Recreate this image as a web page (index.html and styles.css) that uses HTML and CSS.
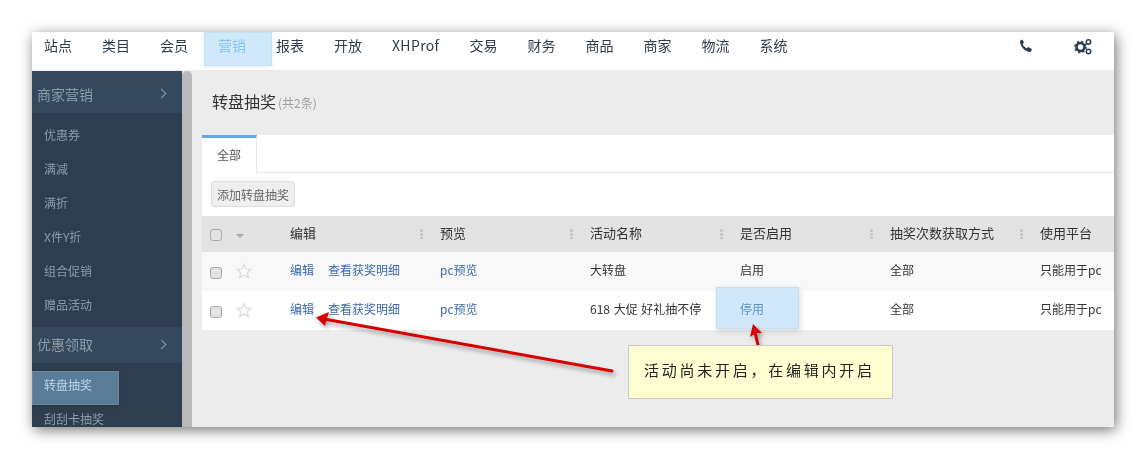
FILE: index.html
```html
<!DOCTYPE html>
<html lang="zh">
<head>
<meta charset="utf-8">
<title>转盘抽奖</title>
<link rel="stylesheet" href="styles.css">
</head>
<body>
<div class="page">
  <div class="frame">
    <nav class="nav">
      <a class="nav-item">站点</a>
      <a class="nav-item">类目</a>
      <a class="nav-item">会员</a>
      <a class="nav-item nav-active">营销<span class="nav-glow"></span></a>
      <a class="nav-item">报表</a>
      <a class="nav-item">开放</a>
      <a class="nav-item nav-latin">XHProf</a>
      <a class="nav-item">交易</a>
      <a class="nav-item">财务</a>
      <a class="nav-item">商品</a>
      <a class="nav-item">商家</a>
      <a class="nav-item">物流</a>
      <a class="nav-item">系统</a>
      <div class="nav-icons">
        <svg class="icon-phone" width="14" height="14" viewBox="0 0 14 14"><path d="M1.500 1.200 3.500.4 5 3.600 3.700 4.900c.7 2 2.100 3.500 4 4.300L9.100 8.100 12.900 10l-.7 2.200c-.5.800-1.200 1-2 .8C5.800 12 2.200 8.400 1.100 3.700 1 2.900 1.100 1.800 1.500 1.200z" fill="#2c3e50"/></svg>
        <svg class="icon-gears" width="18" height="16" viewBox="0 0 18 16">
          <circle cx="6.500" cy="8" r="4" fill="none" stroke="#2c3e50" stroke-width="2.600"/>
          <circle cx="6.500" cy="8" r="5.600" fill="none" stroke="#2c3e50" stroke-width="1.500" stroke-dasharray="2.200 2.200"/>
          <circle cx="14.500" cy="3" r="2.200" fill="none" stroke="#2c3e50" stroke-width="1.500"/>
          <circle cx="14.500" cy="12.500" r="2.200" fill="none" stroke="#2c3e50" stroke-width="1.500"/>
        </svg>
      </div>
    </nav>
    <div class="body">
      <aside class="side">
        <div class="side-group">商家营销<span class="chev"></span></div>
        <ul class="side-list">
          <li class="side-item">优惠券</li>
          <li class="side-item">满减</li>
          <li class="side-item">满折</li>
          <li class="side-item">X件Y折</li>
          <li class="side-item">组合促销</li>
          <li class="side-item">赠品活动</li>
        </ul>
        <div class="side-group side-group-b">优惠领取<span class="chev"></span></div>
        <ul class="side-list">
          <li class="side-item side-active">转盘抽奖</li>
          <li class="side-item">刮刮卡抽奖</li>
        </ul>
      </aside>
      <div class="scroll"><div class="scroll-thumb"></div></div>
      <main class="main">
        <h1 class="title">转盘抽奖<small class="count">(共2条)</small></h1>
        <div class="panel">
          <div class="tabs"><div class="tab">全部</div></div>
          <div class="toolbar"><button class="btn">添加转盘抽奖</button></div>
          <div class="row row-head">
            <div class="cell-check"><span class="check"></span></div>
            <div class="cell-star"><span class="caret"></span></div>
            <div class="cell">编辑<i class="grip"></i></div>
            <div class="cell">预览<i class="grip"></i></div>
            <div class="cell">活动名称<i class="grip"></i></div>
            <div class="cell">是否启用<i class="grip"></i></div>
            <div class="cell">抽奖次数获取方式<i class="grip"></i></div>
            <div class="cell">使用平台</div>
          </div>
          <div class="row row-odd">
            <div class="cell-check"><span class="check"></span></div>
            <div class="cell-star"><svg class="star" width="16" height="16" viewBox="0 0 16 16"><polygon points="8,1.200 10,6 15.200,6.300 11.200,9.700 12.500,14.800 8,12 3.500,14.800 4.800,9.700 .8,6.300 6,6"/></svg></div>
            <div class="cell"><a class="link">编辑</a><a class="link link-gap">查看获奖明细</a></div>
            <div class="cell"><a class="link">pc预览</a></div>
            <div class="cell">大转盘</div>
            <div class="cell">启用</div>
            <div class="cell">全部</div>
            <div class="cell">只能用于pc</div>
          </div>
          <div class="row row-even">
            <div class="cell-check"><span class="check"></span></div>
            <div class="cell-star"><svg class="star" width="16" height="16" viewBox="0 0 16 16"><polygon points="8,1.200 10,6 15.200,6.300 11.200,9.700 12.500,14.800 8,12 3.500,14.800 4.800,9.700 .8,6.300 6,6"/></svg></div>
            <div class="cell"><a class="link">编辑</a><a class="link link-gap">查看获奖明细</a></div>
            <div class="cell"><a class="link">pc预览</a></div>
            <div class="cell cell-name">618 大促 好礼抽不停</div>
            <div class="cell cell-off"><span class="off-glow"></span><span class="off-text">停用</span></div>
            <div class="cell">全部</div>
            <div class="cell">只能用于pc</div>
          </div>
        </div>
      </main>
    </div>
    <svg class="arrows" width="1082" height="395" viewBox="32 32 1082 395">
      <g class="arrow-set">
        <path d="M612 371 324 319" fill="none" stroke="#d60000" stroke-width="3" stroke-linecap="round"/>
        <polygon points="316,317.500 329,312 326.500,319.500 325,326" fill="#d60000"/>
        <path d="M758 345 755 332" fill="none" stroke="#d60000" stroke-width="3" stroke-linecap="round"/>
        <polygon points="753,324 762,333 756,333 750,337" fill="#d60000"/>
      </g>
    </svg>
    <div class="callout">活动尚未开启，在编辑内开启</div>
  </div>
</div>
</body>
</html>
```

FILE: styles.css
```css
* { box-sizing: border-box; }
html, body { margin: 0; padding: 0; background: #fff; }
body {
  width: 1146px;
  height: 459px;
  overflow: hidden;
  font-family: "Noto Sans CJK SC", "Liberation Sans", sans-serif;
  color: #333;
}
.page { padding: 32px; filter: drop-shadow(2px 3px 7px rgba(0,0,0,.55)); }
.frame {
  position: relative;
  width: 1082px;
  height: 395px;
  display: flex;
  flex-direction: column;
  overflow: hidden;
  background: #ececec;
}

.nav {
  height: 38px;
  flex: none;
  display: flex;
  gap: 30px;
  padding-left: 12px;
  background: #fff;
  font-size: 14px;
  line-height: 26px;
  color: #2f3b48;
}
.nav-item { position: relative; display: block; }
.nav-latin { letter-spacing: .35px; }
.nav-active { color: #6db6ec; }
.nav-glow {
  position: absolute;
  left: -14px;
  top: 0;
  width: 68px;
  height: 34px;
  background: rgba(160, 210, 245, .5);
  border: 1px solid rgba(170, 215, 245, .35);
  box-shadow: 0 2px 5px rgba(0,0,0,.07);
}
.nav-icons {
  margin-left: auto;
  display: flex;
  align-items: flex-start;
  gap: 41px;
  padding: 7px 22px 0 0;
}

.body { flex: 1; display: flex; min-height: 0; }
.side {
  width: 150px;
  flex: none;
  margin-top: 1px;
  background: #2c3e50;
  color: #8f9ba6;
  overflow: hidden;
}
.side-group {
  height: 42px;
  padding-left: 5px;
  background: #34495e;
  font-size: 14px;
  line-height: 46px;
  position: relative;
}
.side-group-b { height: 36px; line-height: 34px; }
.chev {
  position: absolute;
  right: 17px;
  top: 19px;
  width: 7px;
  height: 7px;
  border-top: 1.500px solid #8f9ba6;
  border-right: 1.500px solid #8f9ba6;
  transform: rotate(45deg);
}
.side-group-b .chev { top: 14px; }
.side-list { list-style: none; margin: 0; padding: 5px 0; }
.side-item {
  position: relative;
  height: 34px;
  padding-left: 12px;
  font-size: 12px;
  line-height: 34px;
}
.side-active { color: #fff; z-index: 0; }
.side-active::before {
  content: "";
  position: absolute;
  left: 0;
  top: 3px;
  width: 85px;
  height: 32px;
  background: rgba(130, 175, 210, .55);
  border: 1px solid #6f8599;
  box-shadow: 0 1px 3px rgba(0,0,0,.15);
}
.scroll { width: 10px; flex: none; background: #e6e6e6; margin-top: 1px; }
.scroll-thumb { height: 100%; background: #b9b9b9; border-radius: 5px 5px 0 0; }

.main { flex: 1; min-width: 0; padding-left: 10px; }
.title {
  margin: 0;
  height: 65px;
  padding: 19px 0 0 10px;
  font-size: 16px;
  font-weight: 400;
  line-height: 24px;
  color: #333;
}
.count { font-size: 12px; color: #a0a0a0; margin-left: 2px; }
.panel { background: #fff; }
.tabs { height: 38px; border-bottom: 1px solid #e8e8e8; }
.tab {
  width: 55px;
  height: 38px;
  border-top: 3px solid #5dade2;
  border-right: 1px solid #e8e8e8;
  background: #fff;
  padding-left: 15px;
  font-size: 12px;
  line-height: 34px;
  color: #555;
}
.toolbar { height: 43px; padding: 8px 0 0 9px; }
.btn {
  display: block;
  width: 84px;
  height: 26px;
  padding: 0;
  background: #eee;
  border: 1px solid #ddd;
  border-radius: 3px;
  font: inherit;
  font-size: 12px;
  color: #666;
}
.row {
  display: grid;
  grid-template-columns: 34px 39px repeat(5, 150px) 74px;
  height: 39px;
  align-items: center;
  font-size: 12px;
}
.row-head { height: 36px; background: #e3e3e3; font-size: 13px; }
.row-odd { background: #f8f8f8; }
.row-even { background: #fff; }
.cell-check { padding-left: 8px; display: flex; }
.cell-star { display: flex; }
.check {
  display: block;
  width: 12px;
  height: 12px;
  margin-top: 2px;
  background: #e2e2e2;
  border: 1px solid #aaa;
  border-radius: 3px;
}
.caret {
  width: 0;
  height: 0;
  border: 4px solid transparent;
  border-top-color: #aaa;
  border-bottom-width: 0;
  margin-top: 3px;
}
.star { display: block; margin-top: -2px; fill: #fafafa; stroke: #dcdcdc; stroke-width: 1.200; }
.cell { position: relative; padding-left: 15px; white-space: nowrap; height: 100%; display: flex; align-items: center; padding-bottom: 4px; }
.cell-name { word-spacing: 1px; }
.grip {
  position: absolute;
  right: 2px;
  top: 13px;
  width: 3px;
  height: 10px;
  background: repeating-linear-gradient(#c8c8c8 0 3px, transparent 3px 4px);
}
.link { color: #3a69ab; }
.link-gap { margin-left: 14px; }
.off-glow {
  position: absolute;
  left: -9px;
  top: -4px;
  width: 83px;
  height: 42px;
  background: #d0e8fb;
  border: 1px solid #c2dff3;
  box-shadow: 1px 2px 6px rgba(0,0,0,.15);
}
.off-text { position: relative; color: #5f8fb8; }
.arrows {
  position: absolute;
  left: 0;
  top: 0;
  pointer-events: none;
}
.arrow-set { filter: drop-shadow(2px 3px 2px rgba(0,0,0,.35)); }
.callout {
  position: absolute;
  left: 596px;
  top: 313px;
  width: 265px;
  height: 54px;
  padding-left: 15px;
  background: #ffffd2;
  border: 1px solid #c8c8c8;
  font-size: 15px;
  line-height: 48px;
  letter-spacing: 2.750px;
  color: #222;
  white-space: nowrap;
}
```
